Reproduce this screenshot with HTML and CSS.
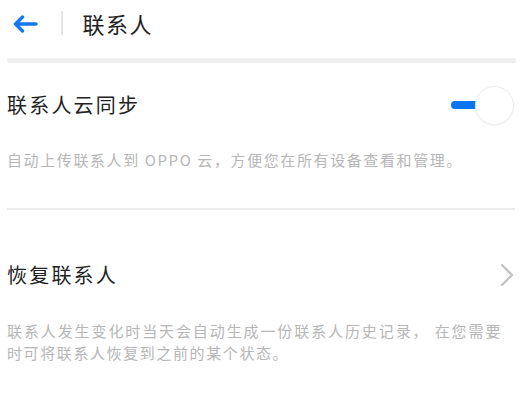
FILE: index.html
```html
<!DOCTYPE html>
<html lang="zh-CN">
<head>
<meta charset="utf-8">
<title>联系人</title>
<link rel="stylesheet" href="styles.css">
</head>
<body>
<header class="header">
  <svg class="back" width="26" height="18" viewBox="0 0 26 18" aria-hidden="true">
    <path d="M24 9 H3.5 M10.5 2 L3.5 9 L10.5 16" fill="none" stroke="#1677ee" stroke-width="3.4" stroke-linecap="round" stroke-linejoin="round"/>
  </svg>
  <span class="sep"></span>
  <h1 class="title">联系人</h1>
</header>
<div class="bar"></div>

<section class="row row-sync">
  <span class="row-title">联系人云同步</span>
  <span class="toggle"><span class="toggle-track"></span><span class="toggle-knob"></span></span>
</section>
<p class="desc desc-sync">自动上传联系人到 OPPO 云，方便您在所有设备查看和管理。</p>
<div class="divider"></div>

<section class="row row-restore">
  <span class="row-title">恢复联系人</span>
  <svg class="chev" width="14" height="24" viewBox="0 0 14 24" aria-hidden="true">
    <path d="M2 2 L12 12 L2 22" fill="none" stroke="#c4c4c4" stroke-width="2.4" stroke-linecap="round" stroke-linejoin="round"/>
  </svg>
</section>
<p class="desc desc-restore">联系人发生变化时当天会自动生成一份联系人历史记录， 在您需要时可将联系人恢复到之前的某个状态。</p>
</body>
</html>
```
FILE: styles.css
```css
html, body {
  margin: 0;
  padding: 0;
  background: #ffffff;
}
body {
  font-family: "Noto Sans CJK SC", "Noto Sans", sans-serif;
  color: #222222;
  width: 526px;
}
.header {
  height: 46px;
  display: flex;
  align-items: center;
  padding-left: 12px;
}
.back {
  display: block;
  flex: none;
  margin-top: 1px;
}
.sep {
  width: 1.5px;
  height: 24px;
  background: #e6e6e6;
  margin-left: 23px;
  flex: none;
}
.title {
  margin: 0 0 0 20px;
  font-size: 22px;
  font-weight: 400;
  letter-spacing: 1.5px;
  line-height: 30px;
  color: #222222;
}
.bar {
  margin: 12px 10px 0 7px;
  height: 5px;
  background: #efefef;
  border-radius: 2px;
}
.row {
  display: flex;
  align-items: center;
  justify-content: space-between;
  height: 40px;
  padding: 0 12px 0 7px;
}
.row-sync {
  margin-top: 22px;
}
.row-restore {
  margin-top: 45px;
}
.row-title {
  font-size: 20px;
  letter-spacing: 2.2px;
  line-height: 28px;
  color: #222222;
}
.toggle {
  display: flex;
  align-items: center;
}
.toggle-track {
  width: 28px;
  height: 8px;
  border-radius: 4px;
  background: #0b74ef;
}
.toggle-knob {
  width: 37px;
  height: 37px;
  margin-left: -4px;
  border-radius: 50%;
  background: #ffffff;
  border: 1px solid #ebebeb;
  box-shadow: 0 1px 2px rgba(0, 0, 0, 0.04);
}
.chev {
  display: block;
}
.desc {
  margin: 0;
  padding: 0 24px 0 7px;
  font-size: 15px;
  letter-spacing: 1.6px;
  line-height: 22px;
  color: #b6b6b6;
  text-align: justify;
}
.desc-sync {
  margin-top: 24px;
}
.desc-restore {
  margin-top: 25px;
}
.divider {
  margin: 37px 11px 0 7px;
  height: 1.5px;
  background: #ececec;
}
```
